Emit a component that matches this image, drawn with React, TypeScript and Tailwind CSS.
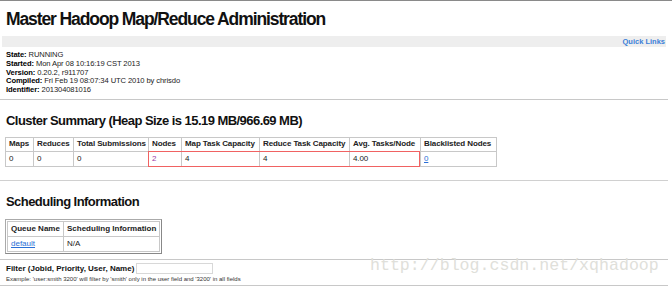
import React from "react";

export default function App() {
  const th = "border border-[#c8c8c8] px-[3px] h-[14px] text-left font-bold whitespace-nowrap overflow-hidden";
  const td = "border border-[#c8c8c8] px-[3px] h-[15px] text-left font-normal whitespace-nowrap";
  return (
    <div className="relative w-[672px] h-[286px] bg-white overflow-hidden font-['Liberation_Sans',Arial,sans-serif] text-black">
      <div className="border-t border-[#8a8a8a]" />
      <h1 className="ml-[6px] mt-[8px] text-[17.5px] leading-[20px] tracking-[-1.1px] font-bold text-[#111]">
        Master Hadoop Map/Reduce Administration
      </h1>
      <div className="ml-[2px] mr-[6px] mt-[7px] h-[11px] bg-[#eeeeee] flex items-center justify-end pr-[1px]">
        <a className="text-[7.5px] font-bold text-[#3b7fd8] leading-[11px]">Quick Links</a>
      </div>
      <div className="ml-[6px] mt-[4px] text-[7.6px] leading-[8.75px] tracking-[-0.1px] text-[#222]">
        <div><b className="text-black">State:</b> RUNNING</div>
        <div><b className="text-black">Started:</b> Mon Apr 08 10:16:19 CST 2013</div>
        <div><b className="text-black">Version:</b> 0.20.2, r911707</div>
        <div><b className="text-black">Compiled:</b> Fri Feb 19 08:07:34 UTC 2010 by chrisdo</div>
        <div><b className="text-black">Identifier:</b> 201304081016</div>
      </div>
      <div className="mt-[4px] mr-[4px] border-t border-[#c8c8c8]" />
      <h2 className="ml-[6px] mt-[14px] text-[13px] leading-[14px] tracking-[-0.55px] font-bold text-[#111]">
        Cluster Summary (Heap Size is 15.19 MB/966.69 MB)
      </h2>
      <div className="relative ml-[5px] mt-[9px] w-fit">
        <table className="table-fixed w-[491px] border-collapse text-[8px] tracking-[-0.1px] text-[#222]">
          <thead>
            <tr>
              <th className={`${th} w-[28px]`}>Maps</th>
              <th className={`${th} w-[40px]`}>Reduces</th>
              <th className={`${th} w-[75px]`}>Total Submissions</th>
              <th className={`${th} w-[33px]`}>Nodes</th>
              <th className={`${th} w-[78px]`}>Map Task Capacity</th>
              <th className={`${th} w-[90px]`}>Reduce Task Capacity</th>
              <th className={`${th} w-[71px]`}>Avg. Tasks/Node</th>
              <th className={`${th} w-[76px]`}>Blacklisted Nodes</th>
            </tr>
          </thead>
          <tbody>
            <tr>
              <td className={td}>0</td>
              <td className={td}>0</td>
              <td className={td}>0</td>
              <td className={`${td} text-[#9a3aa8]`}>2</td>
              <td className={td}>4</td>
              <td className={td}>4</td>
              <td className={td}>4.00</td>
              <td className={td}><a className="text-[#2a6fd6] underline">0</a></td>
            </tr>
          </tbody>
        </table>
        <div className="absolute left-[143px] top-[14px] w-[272px] h-[16px] border border-[#f06262]" />
      </div>
      <div className="mt-[13px] mr-[4px] border-t border-[#d0d0d0]" />
      <h2 className="ml-[6px] mt-[14px] text-[13px] leading-[14px] tracking-[-0.55px] font-bold text-[#111]">
        Scheduling Information
      </h2>
      <div className="ml-[5px] mt-[10px] w-fit border border-[#aaaaaa] border-r-[#888] border-b-[#888] p-[1px]">
        <table className="border-collapse text-[8px] text-[#222]">
          <thead>
            <tr>
              <th className="border border-[#c8c8c8] px-[3px] h-[15px] w-[56px] text-left font-bold whitespace-nowrap">Queue Name</th>
              <th className="border border-[#c8c8c8] px-[3px] h-[15px] w-[95px] text-left font-bold whitespace-nowrap">Scheduling Information</th>
            </tr>
          </thead>
          <tbody>
            <tr>
              <td className="border border-[#c8c8c8] px-[3px] h-[15px]"><a className="text-[#2a6fd6] underline">default</a></td>
              <td className="border border-[#c8c8c8] px-[3px] h-[15px]">N/A</td>
            </tr>
          </tbody>
        </table>
      </div>
      <div className="mt-[5px] mr-[4px] border-t border-[#c8c8c8]" />
      <div className="ml-[6px] mt-[3px] flex items-center gap-[2px]">
        <b className="text-[8px] text-[#111]">Filter (Jobid, Priority, User, Name)</b>
        <div className="w-[77px] h-[11px] border border-[#d8d8d8] bg-white" />
      </div>
      <div className="ml-[6px] text-[6px] leading-[8px] text-[#333]">
        Example: 'user:smith 3200' will filter by 'smith' only in the user field and '3200' in all fields
      </div>
      <div className="mt-[2px] mr-[4px] border-t border-[#c8c8c8]" />
      <div className="absolute left-[370px] top-[256px] text-[16.6px] leading-[20px] text-[#e0e0da] font-['Liberation_Mono',monospace] whitespace-nowrap">
        http://blog.csdn.net/xqhadoop
      </div>
    </div>
  );
}
